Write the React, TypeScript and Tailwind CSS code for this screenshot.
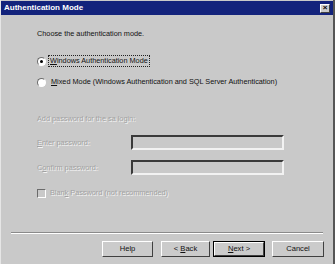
import React from "react";

const Radio = ({ checked }: { checked?: boolean }) => (
  <span className="relative flex h-[9px] w-[9px] items-center justify-center rounded-full border border-t-[#6b6b6b] border-l-[#6b6b6b] border-b-white border-r-white bg-white">
    {checked && <span className="h-[3px] w-[3px] rounded-full bg-black" />}
  </span>
);

const Sunken = ({ className = "" }: { className?: string }) => (
  <div className={`border-[2px] border-t-[#3a3a3a] border-l-[#3a3a3a] border-b-[#f2f2f2] border-r-[#f2f2f2] bg-[#c9c9c9] ${className}`} />
);

const Btn = ({ children, w, primary }: { children: React.ReactNode; w: string; primary?: boolean }) => (
  <div className={`${w} h-[16px] ${primary ? "border border-black" : ""}`}>
    <div className="flex h-full w-full items-center justify-center border border-t-white border-l-white border-b-[#404040] border-r-[#404040] bg-[#cbcbcb] text-[7.6px] leading-none text-[#111]">
      {children}
    </div>
  </div>
);

const Dim = ({ children, className = "" }: { children: React.ReactNode; className?: string }) => (
  <span className={`text-[#a2a2a2] [text-shadow:1px_1px_0_#f4f4f4] ${className}`}>{children}</span>
);

export default function App() {
  return (
    <div className="flex h-[264px] w-[335px] flex-col border-l border-l-[#e6e6e6] border-r-2 border-r-[#555] bg-[#c9c9c9] font-['Liberation_Sans',Arial,sans-serif] text-[7.3px] leading-[10px] text-[#111]">
      <div className="mt-[1px] flex h-[14px] items-center justify-between bg-[#13237c] pl-[3px] pr-[3px]">
        <span className="text-[8px] font-bold text-white">Authentication Mode</span>
        <span className="flex h-[9px] w-[10px] items-center justify-center border border-t-white border-l-white border-b-[#404040] border-r-[#404040] bg-[#cbcbcb] text-[8px] font-bold leading-none text-black">
          ×
        </span>
      </div>

      <div className="flex flex-col pl-[36px]">
        <p className="mt-[14px] h-[10px]">Choose the authentication mode.</p>

        <div className="mt-[16px] flex h-[12px] items-center">
          <Radio checked />
          <span className="ml-[2px] border border-dotted border-[#222] px-[1px] leading-[10px]">
            <span className="underline">W</span>indows Authentication Mode
          </span>
        </div>

        <div className="mt-[9px] flex h-[12px] items-center">
          <Radio />
          <span className="ml-[5px]">
            <span className="underline">M</span>ixed Mode (Windows Authentication and SQL Server Authentication)
          </span>
        </div>

        <p className="mt-[26px] h-[10px]">
          <Dim>Add password for the sa login:</Dim>
        </p>

        <div className="mt-[11px] flex h-[15px] items-center">
          <Dim className="w-[94px]">
            <span className="underline">E</span>nter password:
          </Dim>
          <Sunken className="h-[15px] w-[153px]" />
        </div>

        <div className="mt-[10px] flex h-[15px] items-center">
          <Dim className="w-[94px]">
            C<span className="underline">o</span>nfirm password:
          </Dim>
          <Sunken className="h-[15px] w-[153px]" />
        </div>

        <div className="mt-[13px] flex h-[10px] items-center">
          <span className="h-[9px] w-[9px] border border-t-[#6b6b6b] border-l-[#6b6b6b] border-b-white border-r-white bg-[#c9c9c9]" />
          <Dim className="ml-[4px]">
            Blan<span className="underline">k</span> Password (not recommended)
          </Dim>
        </div>
      </div>

      <div className="mx-[10px] mt-[34px] h-[2px] border-t border-t-[#8a8a8a] border-b border-b-white" />

      <div className="mt-[7px] flex justify-end pr-[9px]">
        <Btn w="w-[51px]">Help</Btn>
        <div className="ml-[8px]">
          <Btn w="w-[49px]">
            &lt;&nbsp;<span className="underline">B</span>ack
          </Btn>
        </div>
        <div className="ml-[3px]">
          <Btn w="w-[52px]" primary>
            <span className="underline">N</span>ext&nbsp;&gt;
          </Btn>
        </div>
        <div className="ml-[7px]">
          <Btn w="w-[52px]">Cancel</Btn>
        </div>
      </div>
    </div>
  );
}
